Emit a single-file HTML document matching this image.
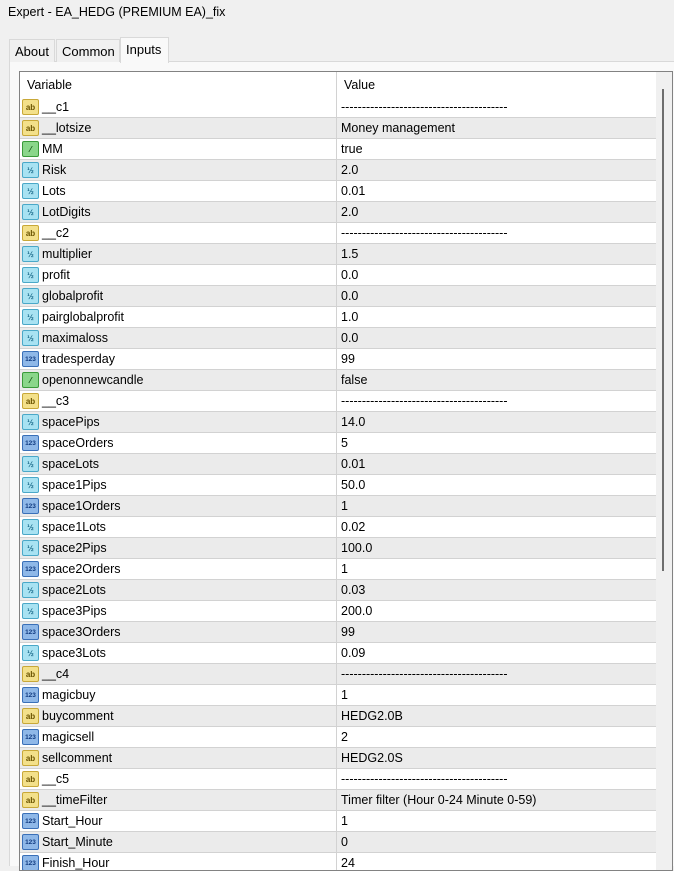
<!DOCTYPE html><html><head><meta charset="utf-8"><style>
*{margin:0;padding:0;box-sizing:border-box}
body{width:674px;height:866px;overflow:hidden;background:#f0f0f0;font-family:"Liberation Sans",sans-serif;font-size:12.5px;color:#000;position:relative}
.title{position:absolute;left:8px;top:5px;font-size:12.5px}
.tab{position:absolute;top:39px;height:23px;border:1px solid #d9d9d9;border-bottom:none;background:#f0f0f0;padding:4px 5px 0 5px;font-size:13px}
.panel{position:absolute;left:9px;top:61px;width:665px;height:805px;background:#f9f9f9;border-top:1px solid #d9d9d9;border-left:1px solid #d9d9d9}
.box{position:absolute;left:19px;top:71px;width:654px;height:800px;border:1px solid #828282;background:#fff;overflow:hidden}
.hdr{height:25px;position:relative;background:#fff}
.hdr span{position:absolute;top:6px}
.r{height:21px;position:relative;border-bottom:1px solid #d2d2d2;background:#fff}
.r:nth-child(even){background:#ebebeb}
.r .n{position:absolute;left:22px;top:3px}
.r .v{position:absolute;left:321px;top:3px}
.r i{position:absolute;left:2px;top:2px;width:17px;height:16px;border-radius:2px;font-style:normal;font-size:8px;line-height:15px;text-align:center;font-weight:bold}
.ab{background:#f3e08a;border:1px solid #c8a838;color:#6a5300}
.b{background:#8ad68a;border:1px solid #3a9a3a;color:#105010}
.d{background:#a8e2f2;border:1px solid #4aa8c8;color:#1a6a8a}
.n3{background:#8fb8e8;border:1px solid #3a70b8;color:#103a80;font-size:6.5px!important}
.div{position:absolute;left:316px;top:0;width:1px;height:800px;background:#d2d2d2}
.sb{position:absolute;left:636px;top:0;width:17px;height:800px;background:#f0f0f0}
.th{position:absolute;left:6px;top:17px;width:2px;height:482px;background:#6e6e6e}
</style></head><body>
<div class="title">Expert - EA_HEDG (PREMIUM EA)_fix</div>
<div class="panel"></div>
<div class="tab" style="left:9px;width:46px">About</div>
<div class="tab" style="left:56px;width:64px">Common</div>
<div class="tab" style="left:120px;top:37px;height:26px;width:49px;background:#f9f9f9;padding-top:4px">Inputs</div>
<div class="box">
<div class="hdr"><span style="left:7px">Variable</span><span style="left:324px">Value</span></div>
<div>
<div class="r"><i class="ab">ab</i><span class="n">__c1</span><span class="v">----------------------------------------</span></div>
<div class="r"><i class="ab">ab</i><span class="n">__lotsize</span><span class="v">Money management</span></div>
<div class="r"><i class="b">⁄</i><span class="n">MM</span><span class="v">true</span></div>
<div class="r"><i class="d">½</i><span class="n">Risk</span><span class="v">2.0</span></div>
<div class="r"><i class="d">½</i><span class="n">Lots</span><span class="v">0.01</span></div>
<div class="r"><i class="d">½</i><span class="n">LotDigits</span><span class="v">2.0</span></div>
<div class="r"><i class="ab">ab</i><span class="n">__c2</span><span class="v">----------------------------------------</span></div>
<div class="r"><i class="d">½</i><span class="n">multiplier</span><span class="v">1.5</span></div>
<div class="r"><i class="d">½</i><span class="n">profit</span><span class="v">0.0</span></div>
<div class="r"><i class="d">½</i><span class="n">globalprofit</span><span class="v">0.0</span></div>
<div class="r"><i class="d">½</i><span class="n">pairglobalprofit</span><span class="v">1.0</span></div>
<div class="r"><i class="d">½</i><span class="n">maximaloss</span><span class="v">0.0</span></div>
<div class="r"><i class="n3">123</i><span class="n">tradesperday</span><span class="v">99</span></div>
<div class="r"><i class="b">⁄</i><span class="n">openonnewcandle</span><span class="v">false</span></div>
<div class="r"><i class="ab">ab</i><span class="n">__c3</span><span class="v">----------------------------------------</span></div>
<div class="r"><i class="d">½</i><span class="n">spacePips</span><span class="v">14.0</span></div>
<div class="r"><i class="n3">123</i><span class="n">spaceOrders</span><span class="v">5</span></div>
<div class="r"><i class="d">½</i><span class="n">spaceLots</span><span class="v">0.01</span></div>
<div class="r"><i class="d">½</i><span class="n">space1Pips</span><span class="v">50.0</span></div>
<div class="r"><i class="n3">123</i><span class="n">space1Orders</span><span class="v">1</span></div>
<div class="r"><i class="d">½</i><span class="n">space1Lots</span><span class="v">0.02</span></div>
<div class="r"><i class="d">½</i><span class="n">space2Pips</span><span class="v">100.0</span></div>
<div class="r"><i class="n3">123</i><span class="n">space2Orders</span><span class="v">1</span></div>
<div class="r"><i class="d">½</i><span class="n">space2Lots</span><span class="v">0.03</span></div>
<div class="r"><i class="d">½</i><span class="n">space3Pips</span><span class="v">200.0</span></div>
<div class="r"><i class="n3">123</i><span class="n">space3Orders</span><span class="v">99</span></div>
<div class="r"><i class="d">½</i><span class="n">space3Lots</span><span class="v">0.09</span></div>
<div class="r"><i class="ab">ab</i><span class="n">__c4</span><span class="v">----------------------------------------</span></div>
<div class="r"><i class="n3">123</i><span class="n">magicbuy</span><span class="v">1</span></div>
<div class="r"><i class="ab">ab</i><span class="n">buycomment</span><span class="v">HEDG2.0B</span></div>
<div class="r"><i class="n3">123</i><span class="n">magicsell</span><span class="v">2</span></div>
<div class="r"><i class="ab">ab</i><span class="n">sellcomment</span><span class="v">HEDG2.0S</span></div>
<div class="r"><i class="ab">ab</i><span class="n">__c5</span><span class="v">----------------------------------------</span></div>
<div class="r"><i class="ab">ab</i><span class="n">__timeFilter</span><span class="v">Timer filter (Hour 0-24 Minute 0-59)</span></div>
<div class="r"><i class="n3">123</i><span class="n">Start_Hour</span><span class="v">1</span></div>
<div class="r"><i class="n3">123</i><span class="n">Start_Minute</span><span class="v">0</span></div>
<div class="r"><i class="n3">123</i><span class="n">Finish_Hour</span><span class="v">24</span></div>
</div>
<div class="div"></div>
<div class="sb"><div class="th"></div></div>
</div>
</body></html>
